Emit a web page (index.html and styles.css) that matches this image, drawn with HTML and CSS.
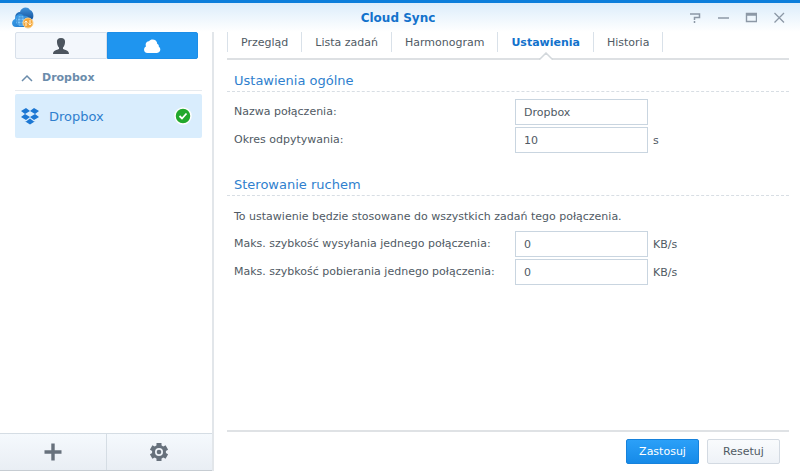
FILE: index.html
```html
<!DOCTYPE html>
<html lang="pl">
<head>
    <meta charset="UTF-8">
    <meta name="viewport" content="width=device-width, initial-scale=1.0">
    <title>Cloud Sync</title>
    <link rel="stylesheet" href="styles.css">
</head>
<body>
    <header class="titlebar">
        <svg class="app-icon" width="24" height="22" viewBox="0 0 24 22" aria-hidden="true">
            <defs>
                <linearGradient id="back-cloud" x1="0" y1="0" x2="0" y2="1">
                    <stop offset="0" stop-color="#3f93dc"/>
                    <stop offset="1" stop-color="#0b4690"/>
                </linearGradient>
                <linearGradient id="front-cloud" x1="0" y1="0" x2="1" y2="1">
                    <stop offset="0" stop-color="#3fa4ee"/>
                    <stop offset="1" stop-color="#1c74c9"/>
                </linearGradient>
            </defs>
            <path d="M5 12C3 8 6 5 9 5C10 0 17 -1 19 3C22 4 23 8 22 11C21 14 18 15 15 15H8Z" fill="url(#back-cloud)"/>
            <path d="M5 20C0 20 0 13 4 12C4 7 11 6 13 9C17 8 19 12 18 15C20 18 17 20 15 20Z" fill="url(#front-cloud)"/>
            <circle cx="10" cy="14" r="5" fill="#7cc5f7"/>
            <path d="M5 14H15M10 9V19M7 10Q5 14 7 18M13 10Q15 14 13 18M6 11H14M6 17H14" fill="none" stroke="#3c91da" stroke-width="1"/>
            <circle cx="17" cy="16" r="5" fill="#f4a63a" stroke="#fbd08a" stroke-width="1"/>
            <path d="M15 19V14M13.500 15.500L15 14L16.500 15.500M19 13V18M17.500 16.500L19 18L20.500 16.500" fill="none" stroke="#fff3dc" stroke-width="1"/>
        </svg>
        <h1 class="title">Cloud Sync</h1>
        <div class="window-controls">
            <button class="window-button" aria-label="Pomoc">
                <svg width="12" height="12" viewBox="0 0 12 12"><path d="M1 2H10.500V5.500H5.500V8M5.500 9V11" fill="none" stroke="currentColor" stroke-width="1.500"/></svg>
            </button>
            <button class="window-button" aria-label="Minimalizuj">
                <svg width="12" height="12" viewBox="0 0 12 12"><path d="M1 6H12" fill="none" stroke="currentColor" stroke-width="1.500"/></svg>
            </button>
            <button class="window-button" aria-label="Maksymalizuj">
                <svg width="12" height="12" viewBox="0 0 12 12"><path d="M1.500 1.500H11.500V9.500H1.500ZM1 3H12" fill="none" stroke="currentColor" stroke-width="1.400"/></svg>
            </button>
            <button class="window-button" aria-label="Zamknij">
                <svg width="12" height="12" viewBox="0 0 12 12"><path d="M1.500 1L11 10.500M11 1L1.500 10.500" fill="none" stroke="currentColor" stroke-width="1.300"/></svg>
            </button>
        </div>
    </header>
    <div class="window-body">
        <aside class="sidebar">
            <div class="switcher">
                <button class="switch" aria-label="Użytkownik">
                    <svg width="18" height="18" viewBox="0 0 18 18"><path d="M9 1C6 1 4.500 2.800 5 5.500C5.200 8 6 9.500 7 10.500V12C5 13 1 13 1 17H17C17 13 13 13 11 12V10.500C12 9.500 12.800 8 13 5.500C13.500 2.800 12 1 9 1Z" fill="currentColor"/></svg>
                </button>
                <button class="switch active" aria-label="Chmura">
                    <svg width="18" height="18" viewBox="0 0 18 18"><path d="M4.500 16C0.500 16 0 11 3 9.500C1.800 6 4 4 6 4.200C8 1.500 14 2 14.300 7C15.500 7.500 16 8.500 15.700 9.500C18.500 11.500 17.500 16 14 16Z" fill="currentColor"/></svg>
                </button>
            </div>
            <button class="group" aria-expanded="true">
                <svg width="12" height="8" viewBox="0 0 12 8"><path d="M1 7L6 2L11 7" fill="none" stroke="currentColor" stroke-width="1.500"/></svg>
                Dropbox
            </button>
            <a class="connection" href="#">
                <svg width="20" height="20" viewBox="0 0 20 20" aria-hidden="true">
                    <path d="M6 2L10 5L5 8L1 5ZM14 2L19 5L15 8L10 5ZM1 11L5 8L10 11L6 14ZM19 11L15 8L10 11L14 14ZM10 12.500L14 15.500L15.500 15L10 18.500L4.500 15L6 15.500Z" fill="#1c77d3"/>
                </svg>
                <span class="connection-name">Dropbox</span>
                <svg width="18" height="18" viewBox="0 0 18 18" role="img" aria-label="OK">
                    <circle cx="9" cy="9" r="8" fill="#22a82c" stroke="#fff" stroke-width="1.500"/>
                    <path d="M5.500 9L8 11.500L12.500 6.500" fill="none" stroke="#fff" stroke-width="1.800"/>
                </svg>
            </a>
            <div class="toolbar">
                <button class="tool" aria-label="Dodaj">
                    <svg width="18" height="18" viewBox="0 0 18 18"><path d="M9 0.500V17.500M0.500 9H17.500" stroke="currentColor" stroke-width="3.400"/></svg>
                </button>
                <button class="tool" aria-label="Opcje">
                    <svg width="18" height="18" viewBox="0 0 18 18">
                        <circle cx="9" cy="9" r="5.500" fill="none" stroke="currentColor" stroke-width="3"/>
                        <path d="M9 0V3.500M9 14.500V18M1.200 4.500L4.200 6.200M13.800 11.800L16.800 13.500M1.200 13.500L4.200 11.800M13.800 6.200L16.800 4.500" stroke="currentColor" stroke-width="5"/>
                        <circle cx="9" cy="9" r="2.300" fill="currentColor"/>
                    </svg>
                </button>
            </div>
        </aside>
        <main class="content">
            <nav class="tabs">
                <a class="tab" href="#">Przegląd</a>
                <a class="tab" href="#">Lista zadań</a>
                <a class="tab" href="#">Harmonogram</a>
                <a class="tab active" href="#">Ustawienia
                    <svg class="notch" width="14" height="8" viewBox="0 0 14 8" aria-hidden="true"><path d="M1 7L7 1L13 7V8H1Z" fill="#fff"/><path d="M0 7H1L7 1L13 7H14" fill="none" stroke="#d3d8dc" stroke-width="1.500"/></svg>
                </a>
                <a class="tab" href="#">Historia</a>
            </nav>
            <form class="settings" id="settings">
                <section class="section">
                    <h2>Ustawienia ogólne</h2>
                    <div class="field">
                        <label for="name">Nazwa połączenia:</label>
                        <input type="text" id="name" value="Dropbox">
                    </div>
                    <div class="field">
                        <label for="period">Okres odpytywania:</label>
                        <input type="text" id="period" value="10">
                        <span class="unit">s</span>
                    </div>
                </section>
                <section class="section">
                    <h2>Sterowanie ruchem</h2>
                    <p class="note">To ustawienie będzie stosowane do wszystkich zadań tego połączenia.</p>
                    <div class="field">
                        <label for="upload">Maks. szybkość wysyłania jednego połączenia:</label>
                        <input type="text" id="upload" value="0">
                        <span class="unit">KB/s</span>
                    </div>
                    <div class="field">
                        <label for="download">Maks. szybkość pobierania jednego połączenia:</label>
                        <input type="text" id="download" value="0">
                        <span class="unit">KB/s</span>
                    </div>
                </section>
            </form>
            <footer class="actions">
                <button class="button primary" type="submit" form="settings">Zastosuj</button>
                <button class="button" type="reset" form="settings">Resetuj</button>
            </footer>
        </main>
    </div>
</body>
</html>
```
FILE: styles.css
```css
* {
    box-sizing: border-box;
}

body {
    margin: 0;
    min-height: 100vh;
    display: flex;
    flex-direction: column;
    font-family: Verdana, "DejaVu Sans", sans-serif;
    font-size: 11px;
    color: #505a64;
    background-color: #fff;
}

button,
input {
    font: inherit;
    color: inherit;
}

button {
    padding: 0;
    border: none;
    background: none;
    cursor: pointer;
}

svg {
    display: block;
    flex: none;
}

a {
    color: inherit;
    text-decoration: none;
}

/* Title bar */
.titlebar {
    display: grid;
    grid-template-columns: 1fr auto 1fr;
    align-items: center;
    height: 32px;
    padding: 0 15px 0 11px;
    border-top: 3px solid #0c7edb;
    background: linear-gradient(#dcedfb, #fff);
}

.title {
    margin: 0;
    font-size: 12px;
    line-height: 16px;
    color: #1272cc;
}

.window-controls {
    display: flex;
    justify-content: flex-end;
    gap: 16px;
    color: #8c98a6;
}

.window-body {
    flex: 1;
    display: flex;
}

/* Sidebar */
.sidebar {
    width: 214px;
    flex: none;
    display: flex;
    flex-direction: column;
    border-right: 2px solid #e2e6ea;
}

.switcher {
    display: flex;
    height: 27px;
    margin: 0 14px 0 15px;
}

.switch {
    flex: 1;
    display: flex;
    align-items: center;
    justify-content: center;
    border: 1px solid #d8e0ea;
    border-radius: 2px 0 0 2px;
    background-color: #f3f7fc;
    color: #4c555f;
}

.switch.active {
    border-color: #1c8ee8;
    border-radius: 0 2px 2px 0;
    background-color: #1f95ef;
    color: #fff;
}

.group {
    display: flex;
    align-items: center;
    gap: 9px;
    height: 32px;
    margin: 0 10px 3px 15px;
    padding: 6px 6px 0;
    border-bottom: 1px solid #e6eaee;
    font-weight: bold;
    color: #6b8cab;
}

.connection {
    display: flex;
    align-items: center;
    gap: 9px;
    height: 44px;
    margin: 0 10px 0 15px;
    padding: 0 10px 0 5px;
    border-radius: 2px;
    background-color: #d9edfd;
    font-size: 13px;
    color: #2f7fce;
}

.connection-name {
    flex: 1;
}

.toolbar {
    display: flex;
    height: 38px;
    margin-top: auto;
    border-top: 1px solid #d5dde4;
    border-bottom: 1px solid #c6ccd2;
    background: linear-gradient(#f5f9fd, #e9eef4);
}

.tool {
    flex: 1;
    display: flex;
    align-items: center;
    justify-content: center;
    color: #67717c;
}

.tool + .tool {
    border-left: 1px solid #d5dde4;
}

/* Tabs */
.content {
    flex: 1;
    display: flex;
    flex-direction: column;
    padding: 0 11px 0 13px;
}

.tabs {
    display: flex;
    height: 28px;
    padding-bottom: 6px;
    border-bottom: 2px solid #dde0e3;
}

.tab {
    position: relative;
    padding: 4px 13px 0;
    border-right: 1px solid #d9e1e9;
}

.tab:first-child {
    border-left: 1px solid #d9e1e9;
}

.tab.active {
    font-weight: bold;
    color: #1272cc;
}

/* Pointer that breaks the line under the active tab */
.notch {
    position: absolute;
    bottom: -8px;
    left: calc(50% - 7px);
}

/* Settings form */
.settings {
    flex: 1;
}

.section {
    padding-top: 10px;
    margin-bottom: 11px;
}

h2 {
    margin: 0 0 7px;
    padding: 0 7px;
    border-bottom: 1px dashed #d8dee4;
    font-size: 13px;
    font-weight: normal;
    line-height: 21px;
    color: #2f7fce;
}

.note {
    margin: 0;
    padding: 0 7px;
    line-height: 28px;
}

.field {
    display: flex;
    align-items: center;
    margin-bottom: 2px;
    padding-left: 7px;
}

.field label {
    width: 281px;
    line-height: 26px;
}

.field input {
    width: 133px;
    height: 26px;
    padding: 0 8px;
    border: 1px solid #c9d5e0;
    border-radius: 0;
    background-color: #fff;
}

.unit {
    margin-left: 5px;
}

/* Footer */
.actions {
    display: flex;
    justify-content: flex-end;
    gap: 8px;
    padding: 7px 9px 7px 0;
    border-top: 2px solid #dfe2e5;
}

.button {
    width: 73px;
    height: 25px;
    border: 1px solid #d3dae2;
    border-radius: 2px;
    background: linear-gradient(#f9fbfd, #eef2f7);
}

.button.primary {
    border-color: #1682dc;
    background: linear-gradient(#2ba0f8, #168ae8);
    color: #fff;
}
```
